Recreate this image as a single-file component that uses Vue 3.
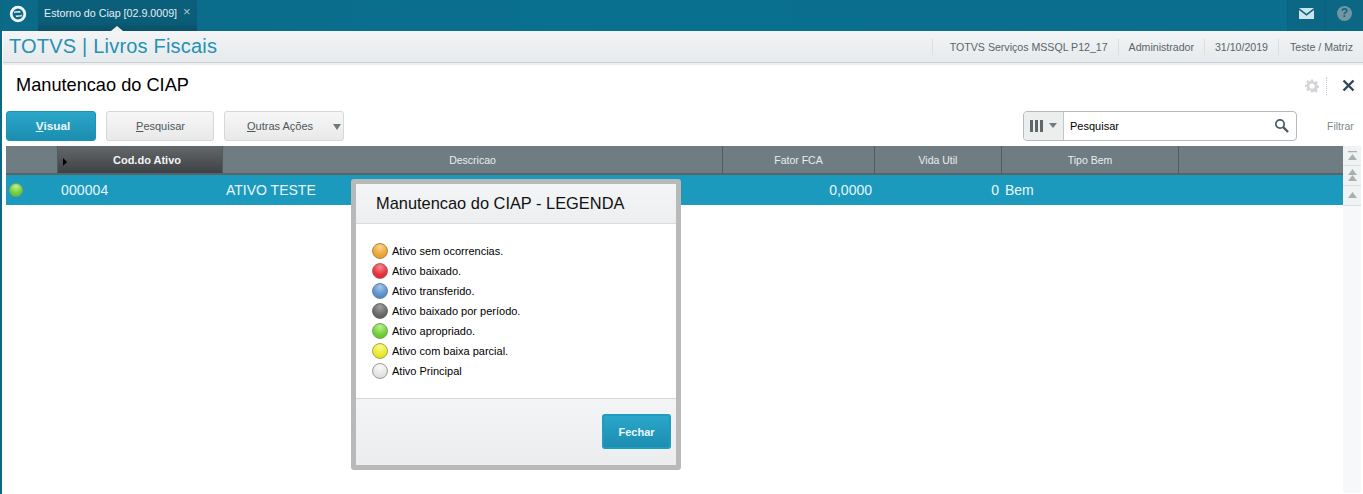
<script setup>
const columns = [
  { label: '', width: 52 },
  { label: 'Cod.do Ativo', width: 165, active: true },
  { label: 'Descricao', width: 500 },
  { label: 'Fator FCA', width: 152 },
  { label: 'Vida Util', width: 127 },
  { label: 'Tipo Bem', width: 177 },
  { label: '', width: 164 },
]

const legend = [
  { color: 'orange', text: 'Ativo sem ocorrencias.' },
  { color: 'red', text: 'Ativo baixado.' },
  { color: 'blue', text: 'Ativo transferido.' },
  { color: 'black', text: 'Ativo baixado por período.' },
  { color: 'green', text: 'Ativo apropriado.' },
  { color: 'yellow', text: 'Ativo com baixa parcial.' },
  { color: 'white', text: 'Ativo Principal' },
]
</script>

<template>
  <div class="app">
    <div class="topbar">
      <div class="logo">
        <svg width="18" height="18" viewBox="0 0 18 18">
          <circle cx="9" cy="9" r="6.8" fill="none" stroke="#f2f7f9" stroke-width="2.8" />
          <path d="M4.8 6.6 L11 6 L13.4 11.2 L7.2 12 Z" fill="#f2f7f9" />
          <path d="M5.6 7.8 L12.6 7.4 L12.6 10.2 L5.6 10.6 Z" fill="#0b6280" />
        </svg>
      </div>
      <div class="tab">
        <span>Estorno do Ciap [02.9.0009]</span>
        <span class="tab-close">×</span>
      </div>
      <div class="top-actions">
        <div class="top-btn">
          <svg width="15" height="11" viewBox="0 0 15 11">
            <path d="M0 0 H15 L7.500 5.800 Z" fill="#cfe3ea" />
            <path d="M0 2 L7.500 7.800 L15 2 V11 H0 Z" fill="#cfe3ea" />
          </svg>
        </div>
        <div class="top-btn">
          <span class="help">?</span>
        </div>
      </div>
    </div>

    <div class="module-bar">
      <div class="module-title">TOTVS | Livros Fiscais</div>
      <div class="module-info">
        <span>TOTVS Serviços MSSQL P12_17</span>
        <span>Administrador</span>
        <span>31/10/2019</span>
        <span>Teste / Matriz</span>
      </div>
    </div>

    <div class="page">
      <div class="page-head">
        <h1>Manutencao do CIAP</h1>
        <div class="page-icons">
          <svg class="gear" width="14" height="14" viewBox="0 0 24 24">
            <path fill="#d3d6d8" fill-rule="evenodd" d="M10 1h4l.6 3.2 2 .8L19.300 3.200l2.800 2.800-1.800 2.700.8 2 3.200.6v4l-3.200.6-.8 2 1.800 2.700-2.800 2.800-2.700-1.800-2 .8L14 23h-4l-.6-3.200-2-.8-2.700 1.800-2.800-2.800 1.800-2.700-.8-2L0 14v-4l3.200-.6.8-2L2.200 4.700 5 1.900l2.700 1.800 2-.8z M12 7.500a4.500 4.500 0 1 0 0 9 4.500 4.500 0 0 0 0-9z" />
          </svg>
          <span class="icon-sep"></span>
          <svg class="close-x" width="13" height="13" viewBox="0 0 13 13">
            <path d="M1.500 1.500 L11.500 11.500 M11.500 1.500 L1.500 11.500" stroke="#2f4858" stroke-width="2.400" fill="none" />
          </svg>
        </div>
      </div>

      <div class="toolbar">
        <button class="btn primary visual"><u>V</u>isual</button>
        <button class="btn pesquisar"><u>P</u>esquisar</button>
        <button class="btn outras">
          <span class="outras-label"><u>O</u>utras Ações</span>
          <span class="caret"></span>
        </button>
        <div class="search">
          <div class="search-cols">
            <span class="bars"><i></i><i></i><i></i></span>
            <span class="caret small"></span>
          </div>
          <div class="search-text">Pesquisar</div>
          <svg class="lens" width="15" height="15" viewBox="0 0 15 15">
            <circle cx="6" cy="6" r="4.200" fill="none" stroke="#4a5a62" stroke-width="1.700" />
            <path d="M9.200 9.200 L14 14" stroke="#4a5a62" stroke-width="2.400" />
          </svg>
        </div>
        <span class="filtrar">Filtrar</span>
      </div>

      <div class="grid-wrap">
        <div class="grid">
          <div class="grid-head">
            <div
              v-for="(col, i) in columns"
              :key="i"
              class="head-cell"
              :class="{ active: col.active }"
              :style="{ width: col.width + 'px' }"
            >
              <span v-if="col.active" class="sort-mark"></span>
              {{ col.label }}
            </div>
          </div>
          <div class="grid-row">
            <div class="cell status"><span class="ball green small-ball"></span></div>
            <div class="cell code">000004</div>
            <div class="cell desc">ATIVO TESTE</div>
            <div class="cell fator">0,0000</div>
            <div class="cell vida">0</div>
            <div class="cell tipo">Bem</div>
          </div>
        </div>
        <div class="scroll">
          <div class="scroll-btn"><svg width="11" height="10" viewBox="0 0 11 10"><path d="M1 0H10V1.200H1Z M5.500 3 L10 9 H1Z" fill="#a9b0b4" /></svg></div>
          <div class="scroll-btn"><svg width="11" height="13" viewBox="0 0 11 13"><path d="M5.500 0 L10 6 H1Z M5.500 6 L10 12 H1Z" fill="#a9b0b4" /></svg></div>
          <div class="scroll-btn"><svg width="9" height="7" viewBox="0 0 9 7"><path d="M4.500 0 L9 6 H0Z" fill="#a9b0b4" /></svg></div>
          <div class="scroll-track"></div>
        </div>
      </div>
    </div>

    <div class="dialog">
      <div class="dialog-inner">
        <div class="dialog-head">Manutencao do CIAP - LEGENDA</div>
        <ul class="legend">
          <li v-for="item in legend" :key="item.color">
            <span class="ball" :class="item.color"></span>
            <span>{{ item.text }}</span>
          </li>
        </ul>
        <div class="dialog-foot">
          <button class="btn primary fechar">Fechar</button>
        </div>
      </div>
    </div>
  </div>
</template>

<style>
html, body {
  margin: 0;
  background: #fff;
}
</style>

<style scoped>
.app {
  position: relative;
  width: 1363px;
  height: 494px;
  box-sizing: border-box;
  border-left: 2px solid #0b6a80;
  overflow: hidden;
  background: #fff;
  font-family: "Liberation Sans", Arial, sans-serif;
  color: #000;
}

.topbar {
  display: flex;
  height: 31px;
  background: linear-gradient(90deg, #0b6a88, #0a7090 40%, #0a6f8f);
}

.logo {
  width: 36px;
  flex: none;
  display: flex;
  align-items: center;
  justify-content: flex-start;
  padding: 0 0 3px 7px;
  box-sizing: border-box;
}

.tab {
  position: relative;
  width: 159px;
  padding: 0 0 5px 6px;
  box-sizing: border-box;
  display: flex;
  align-items: center;
  gap: 6px;
  font-size: 10.7px;
  color: #e4eff3;
  background: linear-gradient(#0a5f7b, #0a5d78 70%, #0c4f66);
  white-space: nowrap;
}

.tab::after {
  content: "";
  position: absolute;
  left: 73px;
  bottom: 0;
  border-left: 6px solid transparent;
  border-right: 6px solid transparent;
  border-bottom: 5px solid #eef1f3;
}

.tab-close {
  font-size: 13px;
  color: #a9c6d1;
  margin-top: -3px;
}

.top-actions {
  margin-left: auto;
  display: flex;
}

.top-btn {
  width: 38px;
  display: flex;
  align-items: center;
  justify-content: center;
  padding-bottom: 5px;
  box-sizing: border-box;
  background: #0b6783;
  border-left: 1px solid #0a6280;
}

.help {
  width: 15px;
  height: 15px;
  border-radius: 50%;
  background: #7396a3;
  color: #0b6783;
  font-size: 12px;
  font-weight: bold;
  line-height: 15px;
  text-align: center;
}

.module-bar {
  display: flex;
  align-items: center;
  justify-content: space-between;
  height: 32px;
  margin-left: 1px;
  padding: 0 10px 0 6px;
  box-sizing: border-box;
  background: linear-gradient(#f2f4f5, #e7eaec);
  border-bottom: 1px solid #c9ced1;
  box-shadow: 0 2px 0 #eceef0;
}

.module-title {
  font-size: 20px;
  color: #2591b5;
  letter-spacing: 0.2px;
}

.module-info {
  display: flex;
  font-size: 10.6px;
  color: #59646b;
}

.module-info span {
  padding: 0 10px;
  border-left: 1px solid #dcdfe1;
  line-height: 16px;
}

.module-info span:first-child {
  padding-left: 17px;
}

.module-info span:last-child {
  padding-right: 0;
  padding-left: 11px;
}

.page {
  margin-left: 4px;
}

.page-head {
  display: flex;
  align-items: center;
  justify-content: space-between;
  height: 45px;
  padding: 0 8px 0 10px;
}

.page-head h1 {
  margin: 0;
  font-size: 18.2px;
  font-weight: normal;
}

.page-icons {
  display: flex;
  align-items: center;
  gap: 7px;
}

.icon-sep {
  height: 18px;
  margin-right: 8px;
  border-left: 1px dotted #c8cccf;
}

.gear {
  display: block;
}

.close-x {
  display: block;
}

.toolbar {
  display: flex;
  align-items: center;
  height: 31px;
  margin-top: 2px;
}

.btn {
  height: 30px;
  padding: 0;
  border: 1px solid #d5d8da;
  border-radius: 3px;
  background: linear-gradient(#f7f7f7, #e9e9e9);
  font-family: inherit;
  font-size: 11px;
  color: #4c565c;
}

.btn.primary {
  width: 90px;
  border-color: #1c93b8;
  background: linear-gradient(#2ba7c9, #1b8db0);
  color: #eaf6fa;
  font-weight: bold;
}

.btn.visual {
  padding-left: 4px;
  font-size: 11.8px;
}

.pesquisar {
  width: 108px;
  margin-left: 10px;
  padding-left: 1px;
}

.outras {
  position: relative;
  width: 120px;
  margin-left: 10px;
  text-align: left;
  padding-left: 22px;
}

.caret {
  position: absolute;
  right: 2px;
  top: 12px;
  border-left: 4.500px solid transparent;
  border-right: 4.500px solid transparent;
  border-top: 6px solid #6f7a80;
}

.caret.small {
  position: static;
  border-left-width: 4px;
  border-right-width: 4px;
  border-top-width: 5px;
}

.search {
  display: flex;
  align-items: center;
  width: 274px;
  height: 30px;
  margin-left: auto;
  box-sizing: border-box;
  border: 1px solid #b5babd;
  border-radius: 4px;
  background: #fff;
}

.search-cols {
  display: flex;
  align-items: center;
  gap: 6px;
  width: 40px;
  height: 100%;
  padding-left: 6px;
  box-sizing: border-box;
  background: #eceded;
  border-right: 1px solid #c3c7c9;
  border-radius: 3px 0 0 3px;
}

.bars {
  display: flex;
  gap: 2px;
}

.bars i {
  width: 3px;
  height: 12px;
  background: #5d686e;
}

.search-text {
  flex: 1;
  padding-left: 6px;
  font-size: 11px;
}

.lens {
  margin-right: 7px;
}

.filtrar {
  width: 66px;
  padding-left: 30px;
  box-sizing: border-box;
  font-size: 10.500px;
  color: #7d8a91;
}

.grid-wrap {
  display: flex;
  height: 347px;
  margin-top: 5px;
}

.grid {
  width: 1337px;
  flex: none;
}

.grid-head {
  display: flex;
  height: 29px;
}

.head-cell {
  position: relative;
  flex: none;
  display: flex;
  align-items: center;
  justify-content: center;
  box-sizing: border-box;
  background: #6f7c82;
  border-right: 1px solid #4f5b61;
  border-bottom: 2px solid #56646b;
  font-size: 10.500px;
  color: #e9eef0;
}

.head-cell:last-child {
  border-right: 0;
}

.head-cell.active {
  padding-left: 14px;
  background: linear-gradient(#64686b, #3e4245);
  color: #f2f4f5;
  font-weight: bold;
  font-size: 11px;
}

.sort-mark {
  position: absolute;
  left: 5px;
  top: 12px;
  border-top: 4px solid transparent;
  border-bottom: 4px solid transparent;
  border-left: 4px solid #000;
}

.grid-row {
  display: flex;
  align-items: center;
  height: 30px;
  background: #1c9abd;
  color: #e8f6fa;
  font-size: 14px;
}

.cell {
  box-sizing: border-box;
  flex: none;
}

.status {
  width: 52px;
  padding-left: 3px;
  display: flex;
}

.code {
  width: 165px;
  padding-left: 3px;
  letter-spacing: 0.1px;
}

.desc {
  width: 500px;
  padding-left: 3px;
}

.fator {
  width: 152px;
  padding-right: 3px;
  text-align: right;
}

.vida {
  width: 127px;
  padding-right: 3px;
  text-align: right;
}

.tipo {
  padding-left: 3px;
}

.scroll {
  width: 18px;
  display: flex;
  flex-direction: column;
  background: #f7f8f9;
}

.scroll-btn {
  height: 20px;
  flex: none;
  display: flex;
  align-items: center;
  justify-content: center;
  box-sizing: border-box;
  background: #f1f2f3;
  border-bottom: 1px solid #dcdfe1;
}

.scroll-track {
  flex: 1;
}

.ball {
  display: inline-block;
  width: 16px;
  height: 16px;
  border-radius: 50%;
  box-sizing: border-box;
  border: 1px solid #888;
  flex: none;
}

.small-ball {
  width: 14px;
  height: 14px;
}

.ball.orange { background: radial-gradient(circle at 50% 22%, #fbd48c, #eeaa3c 55%, #d9952c); border-color: #a98748; }
.ball.red { background: radial-gradient(circle at 50% 22%, #f78a90, #ea3540 55%, #cf2530); border-color: #a86268; }
.ball.blue { background: radial-gradient(circle at 50% 22%, #a4c6ea, #5e97d0 55%, #4580ba); border-color: #66829e; }
.ball.black { background: radial-gradient(circle at 50% 22%, #a2a2a2, #6c6c6c 55%, #565656); border-color: #6b6b6b; }
.ball.green { background: radial-gradient(circle at 50% 22%, #bdf08f, #77d140 55%, #58ba2c); border-color: #76a760; }
.ball.yellow { background: radial-gradient(circle at 50% 22%, #fbf98e, #eeea35 55%, #d6d322); border-color: #a9a756; }
.ball.white { background: radial-gradient(circle at 50% 22%, #fbfbfb, #e6e6e6 55%, #d6d6d6); border-color: #9a9a9a; }

.dialog {
  position: absolute;
  left: 349px;
  top: 179px;
  width: 330px;
  height: 291px;
  box-sizing: border-box;
  padding: 5px;
  background: #b9b9b9;
  border-radius: 3px;
}

.dialog-inner {
  display: flex;
  flex-direction: column;
  height: 100%;
  background: #fff;
}

.dialog-head {
  height: 40px;
  line-height: 39px;
  padding-left: 20px;
  box-sizing: border-box;
  background: linear-gradient(#f4f5f6, #eceeef);
  border-bottom: 1px solid #d9dbdc;
  font-size: 16.4px;
  color: #111;
}

.legend {
  list-style: none;
  flex: 1;
  margin: 0;
  padding: 17px 0 0 16px;
  font-size: 11px;
}

.legend li {
  display: flex;
  align-items: center;
  gap: 4px;
  height: 20px;
}

.dialog-foot {
  display: flex;
  justify-content: flex-end;
  align-items: flex-start;
  height: 67px;
  padding: 15px 5px 0 0;
  box-sizing: border-box;
  background: linear-gradient(#f3f4f5, #ecedef);
  border-top: 1px solid #d5d7d8;
}

.btn.fechar {
  width: 69px;
  height: 35px;
  border: 2px solid #1f9cc0;
}
</style>
